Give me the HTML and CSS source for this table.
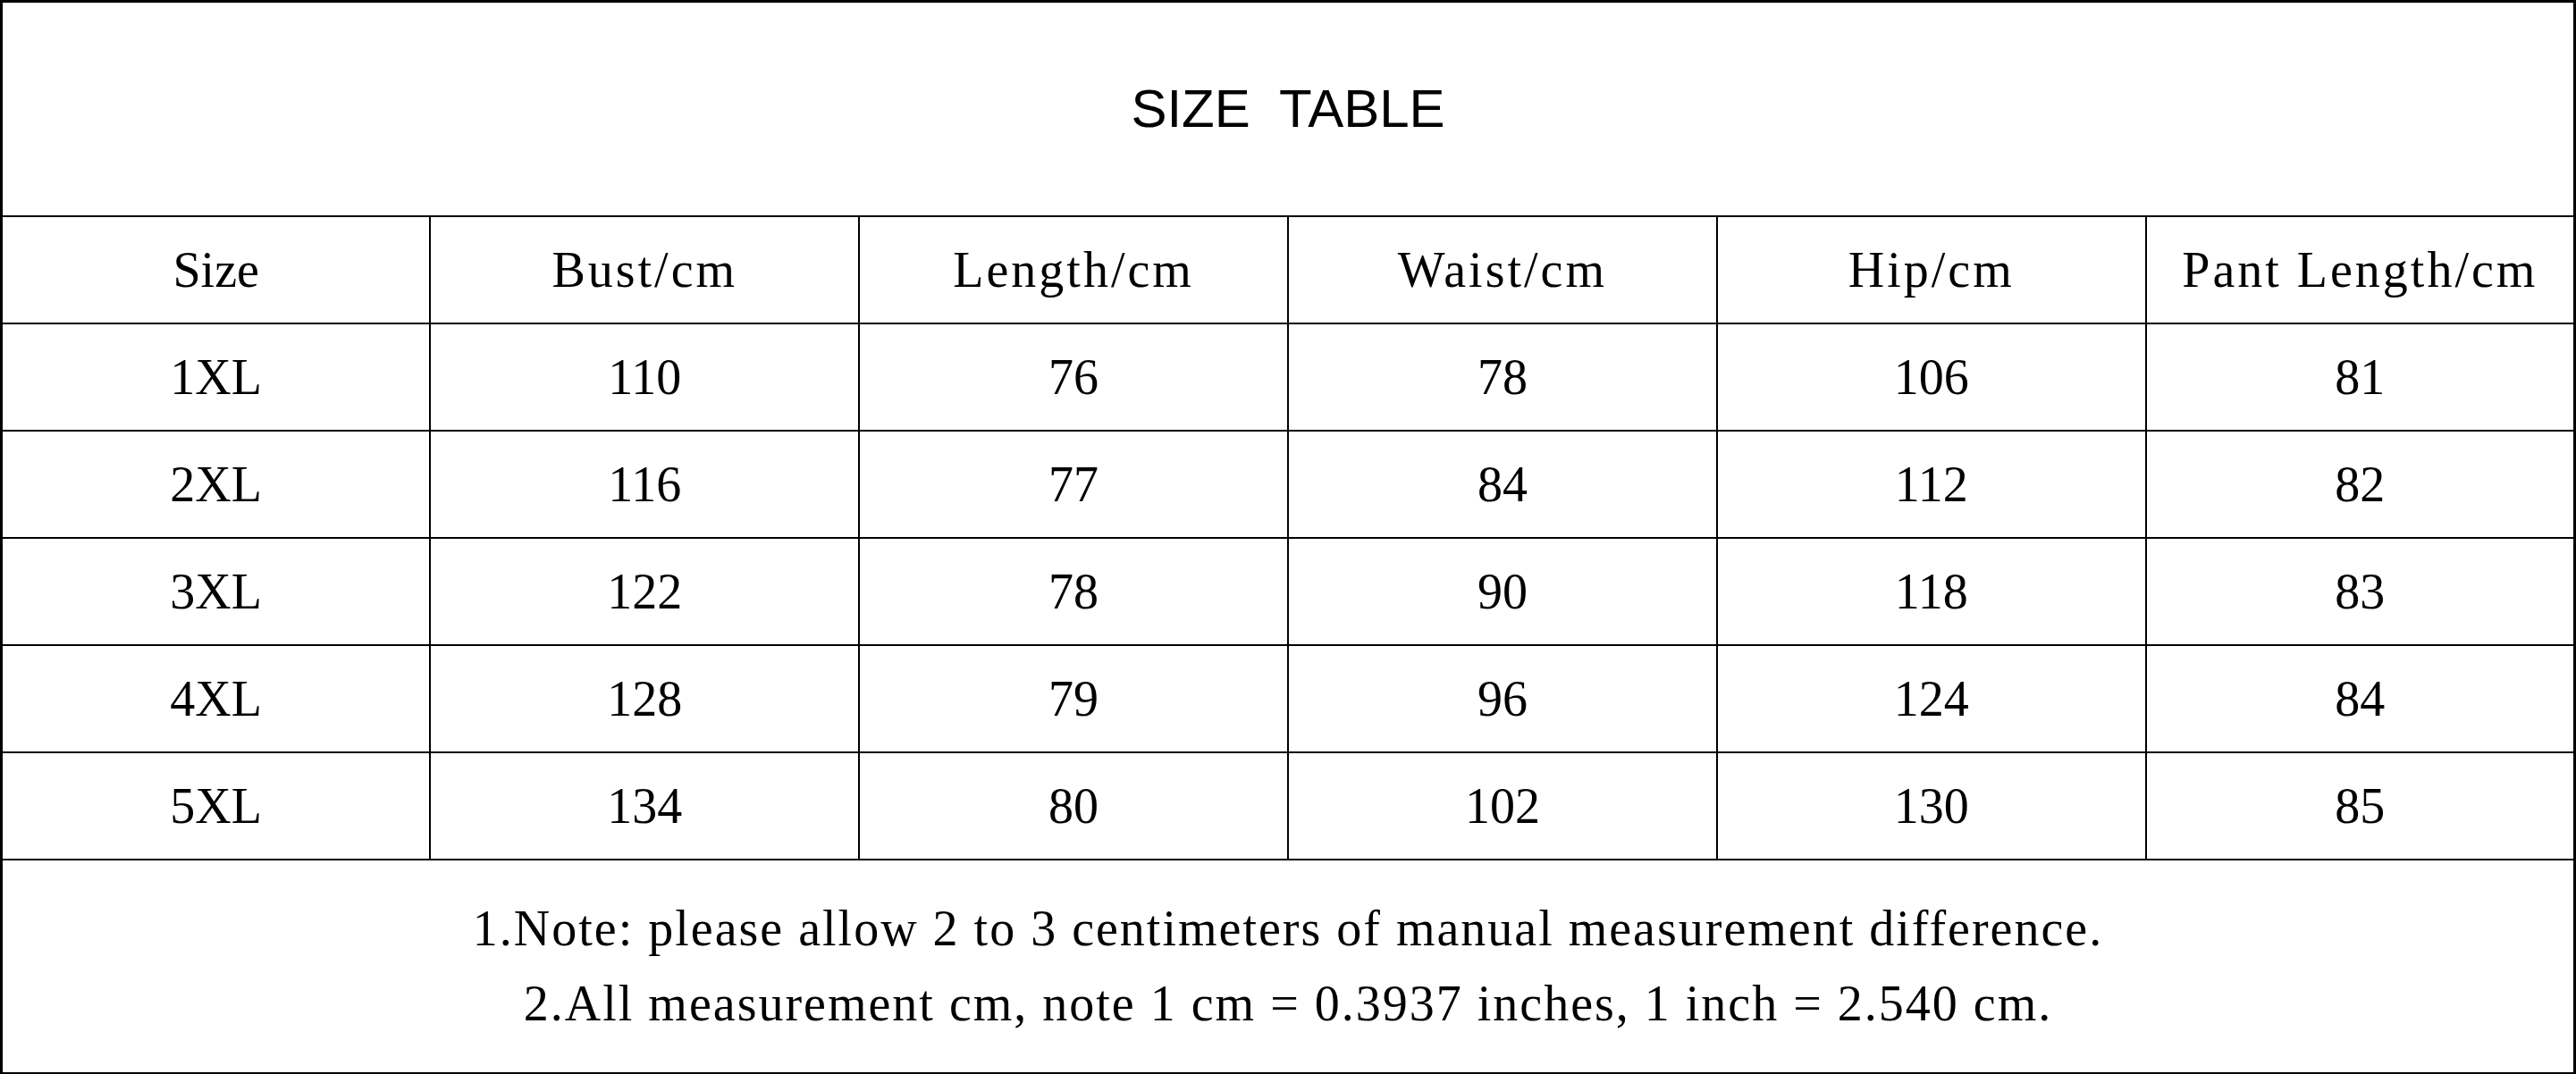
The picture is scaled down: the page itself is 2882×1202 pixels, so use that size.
FILE: index.html
```html
<!DOCTYPE html>
<html lang="en">
<head>
  <meta charset="UTF-8">
  <meta name="viewport" content="width=device-width, initial-scale=1.0">
  <title>Size Table</title>
  <link rel="stylesheet" href="styles.css">
</head>
<body>

  <table class="size-table">
    <tr class="title-row">
      <th colspan="6" class="title">SIZE&nbsp; TABLE</th>
    </tr>
    <tr class="head-row">
      <th class="size-col">Size</th>
      <th>Bust/cm</th>
      <th>Length/cm</th>
      <th>Waist/cm</th>
      <th>Hip/cm</th>
      <th>Pant Length/cm</th>
    </tr>
    <tr>
      <td>1XL</td><td>110</td><td>76</td><td>78</td><td>106</td><td>81</td>
    </tr>
    <tr>
      <td>2XL</td><td>116</td><td>77</td><td>84</td><td>112</td><td>82</td>
    </tr>
    <tr>
      <td>3XL</td><td>122</td><td>78</td><td>90</td><td>118</td><td>83</td>
    </tr>
    <tr>
      <td>4XL</td><td>128</td><td>79</td><td>96</td><td>124</td><td>84</td>
    </tr>
    <tr>
      <td>5XL</td><td>134</td><td>80</td><td>102</td><td>130</td><td>85</td>
    </tr>
    <tr class="notes-row">
      <td colspan="6" class="notes">
        <p>1.Note: please allow 2 to 3 centimeters of manual measurement difference.</p>
        <p>2.All measurement cm, note 1 cm = 0.3937 inches, 1 inch = 2.540 cm.</p>
      </td>
    </tr>
  </table>

</body>
</html>
```

FILE: styles.css
```css
/* Page */
body {
  margin: 0;
  padding: 0;
  background-color: #fff;
  color: #000;
  font-family: 'Liberation Serif', 'Times New Roman', serif;
}

/* Main table */
.size-table {
  width: 2882px;
  height: 1202px;
  border-collapse: collapse;
  table-layout: fixed;
  border: 3px solid #000;
}

.size-table th,
.size-table td {
  border: 2px solid #000;
  padding: 0;
  text-align: center;
  vertical-align: middle;
  font-size: 56px;
  font-weight: normal;
}

.size-table tr {
  height: 120px;
}

/* Title */
.title-row {
  height: 240px !important;
}

.size-table .title {
  font-family: 'Liberation Sans', Arial, sans-serif;
  font-size: 60px;
}

/* Header labels are a bit more open than the numbers */
.head-row th {
  letter-spacing: 3px;
}

.head-row .size-col {
  letter-spacing: 0;
}

/* Notes */
.notes-row {
  height: 240px !important;
}

.notes p {
  margin: 0;
  line-height: 84px;
  letter-spacing: 2px;
}
```
